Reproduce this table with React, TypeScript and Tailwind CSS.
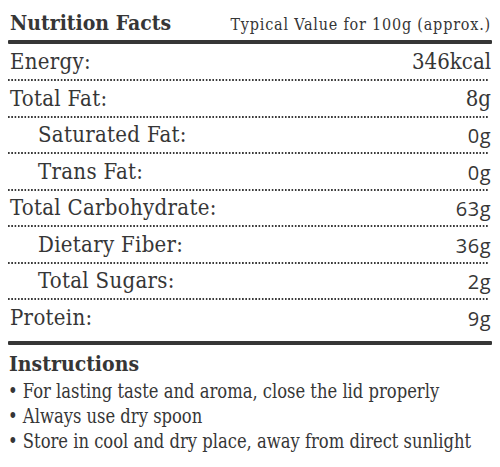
import React from "react";

const serif = { fontFamily: '"DejaVu Serif", serif', fontStretch: "condensed" } as React.CSSProperties;
const sans = { fontFamily: '"Open Sans", "Noto Sans", sans-serif', fontStretch: "100%" } as React.CSSProperties;

const rows: { label: string; value: string; indent?: boolean; sansVal?: boolean }[] = [
  { label: "Energy:", value: "346kcal" },
  { label: "Total Fat:", value: "8g" },
  { label: "Saturated Fat:", value: "0g", indent: true, sansVal: true },
  { label: "Trans Fat:", value: "0g", indent: true, sansVal: true },
  { label: "Total Carbohydrate:", value: "63g", sansVal: true },
  { label: "Dietary Fiber:", value: "36g", indent: true, sansVal: true },
  { label: "Total Sugars:", value: "2g", indent: true, sansVal: true },
  { label: "Protein:", value: "9g", sansVal: true },
];

function Dots() {
  return (
    <div className="h-[2px] mr-[4px] bg-[linear-gradient(to_right,#3a3a3a_60%,transparent_60%)] bg-[length:3.3px_2px]" />
  );
}

export default function App() {
  return (
    <div className="w-[500px] h-[467px] overflow-hidden bg-white text-[#363636] px-[8px]" style={serif}>
      <div className="flex items-end justify-between h-[40px] pb-[7px] pl-[2px] pr-[1px]">
        <div className="text-[21px] font-bold leading-none">Nutrition Facts</div>
        <div className="text-[16px] leading-none tracking-[0.8px]">Typical Value for 100g (approx.)</div>
      </div>
      <div className="h-[4px] bg-[#363636] rounded-[1px]" />
      {rows.map((r, i) => (
        <div key={i}>
          <div
            className={`flex items-end justify-between pr-[1px] ${i === 0 ? "h-[35px]" : i === rows.length - 1 ? "h-[41px] pb-[12px]" : "h-[34.5px]"} ${i === rows.length - 1 ? "" : "pb-[6px]"} ${r.indent ? "pl-[30px]" : "pl-[2px]"}`}
          >
            <span className="text-[22px] leading-none tracking-[0.3px]">{r.label}</span>
            {r.sansVal ? (
              <span className="text-[20px] leading-none tracking-[0.5px]" style={sans}>{r.value}</span>
            ) : (
              <span className="text-[22px] leading-none">{r.value}</span>
            )}
          </div>
          {i < rows.length - 1 && <Dots />}
        </div>
      ))}
      <div className="h-[4px] bg-[#363636] rounded-[1px]" />
      <div className="pt-[8px]">
        <div className="pl-[1px] text-[21px] font-bold leading-[22px]">Instructions</div>
        <ul className="text-[20px] leading-[25px] mt-[4px]">
          <li className="origin-left [transform:scaleX(0.91)] whitespace-nowrap">• For lasting taste and aroma, close the lid properly</li>
          <li className="origin-left [transform:scaleX(0.91)] whitespace-nowrap">• Always use dry spoon</li>
          <li className="origin-left [transform:scaleX(0.91)] whitespace-nowrap">• Store in cool and dry place, away from direct sunlight</li>
        </ul>
      </div>
    </div>
  );
}
